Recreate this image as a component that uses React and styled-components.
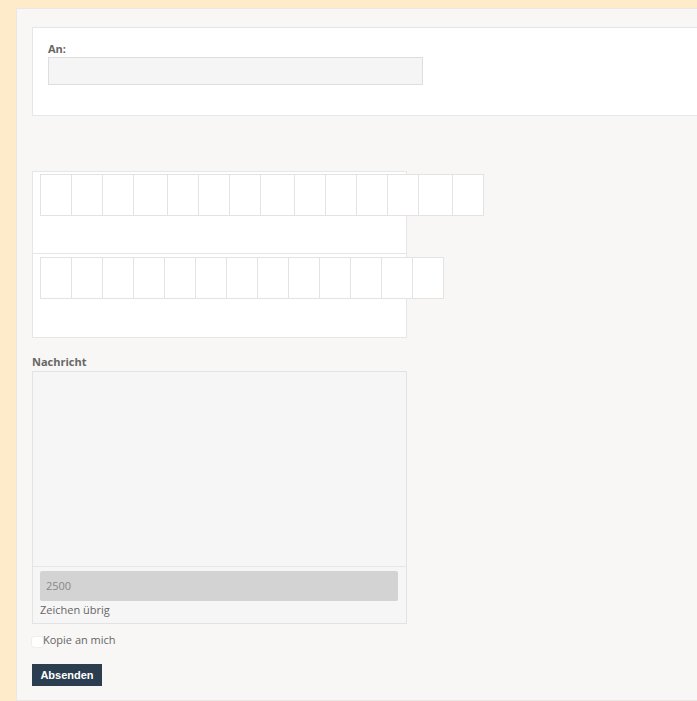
import React from "react";
import styled, { createGlobalStyle } from "styled-components";

const Global = createGlobalStyle`
  html, body { margin: 0; padding: 0; }
  body {
    background: #fdebc9;
    overflow: hidden;
    font-family: "Open Sans", "Liberation Sans", sans-serif;
  }
`;

const Page = styled.div`
  padding: 8px 0 0 16px;
  width: 100%;
  height: 701px;
  box-sizing: border-box;
  overflow: hidden;
`;

const Panel = styled.div`
  width: 720px;
  height: 693px;
  box-sizing: border-box;
  background: #f8f7f5;
  border: 1px solid #ebe8e3;
  padding: 18px 0 0 15px;
`;

const RecipientBox = styled.div`
  width: 700px;
  box-sizing: border-box;
  background: #fff;
  border: 1px solid #e6e6e6;
  padding: 13px 15px 30px;
`;

const Label = styled.div`
  font-size: 11px;
  font-weight: 700;
  line-height: 16px;
  color: #666;
`;

const TextInput = styled.div`
  width: 375px;
  height: 28px;
  box-sizing: border-box;
  background: #f5f5f5;
  border: 1px solid #dedede;
`;

const GridStack = styled.div`
  margin-top: 55px;
  width: 375px;
`;

const GridBox = styled.div`
  box-sizing: border-box;
  width: 375px;
  height: ${(p) => p.$h}px;
  background: #fff;
  border: 1px solid #e6e6e6;
  ${(p) => (p.$first ? "" : "border-top: 0;")}
  padding: ${(p) => (p.$first ? 2 : 3)}px 0 0 7px;
`;

const CellRow = styled.div`
  display: flex;
`;

const Cell = styled.div`
  flex: none;
  box-sizing: border-box;
  width: ${(p) => p.$w + 1}px;
  height: 42px;
  margin-right: -1px;
  background: #fff;
  border: 1px solid #e3e3e3;
`;

const MessageLabel = styled(Label)`
  margin-top: 16px;
  margin-bottom: 2px;
  line-height: 15px;
`;

const MessageBox = styled.div`
  width: 375px;
  box-sizing: border-box;
  border: 1px solid #e3e3e3;
  background: #f6f6f6;
`;

const TextArea = styled.div`
  height: 194px;
  border-bottom: 1px solid #e6e6e6;
`;

const Counter = styled.div`
  padding: 4px 8px 5px 7px;
`;

const CountField = styled.div`
  height: 30px;
  box-sizing: border-box;
  background: #d3d3d3;
  border-radius: 2px;
  padding-left: 6px;
  font-size: 11px;
  line-height: 30px;
  color: #888;
`;

const CountText = styled.div`
  font-size: 11px;
  line-height: 17px;
  color: #666;
`;

const CheckRow = styled.label`
  display: flex;
  align-items: center;
  margin-top: 8px;
  height: 14px;
  font-size: 11px;
  color: #666;
`;

const CheckBox = styled.span`
  width: 11px;
  height: 10px;
  margin-top: 5px;
  background: #fff;
  border-radius: 2px;
  box-shadow: 0 0 0 0.5px #e6e6e6;
`;

const SubmitButton = styled.button`
  display: block;
  margin-top: 18px;
  width: 70px;
  height: 22px;
  padding: 0;
  border: 0;
  background: #2b3e50;
  color: #fff;
  font-family: "Liberation Sans", Arial, sans-serif;
  font-size: 11px;
  font-weight: 700;
`;

const row1 = [31, 31, 31, 34, 31, 31, 31, 34, 31, 31, 31, 31, 34, 31];
const row2 = [31, 31, 31, 31, 31, 31, 31, 31, 31, 31, 31, 31, 31];

export default function App() {
  return (
    <>
      <Global />
      <Page>
        <Panel>
          <RecipientBox>
            <Label>An:</Label>
            <TextInput />
          </RecipientBox>
          <GridStack>
            <GridBox $first $h={83}>
              <CellRow>
                {row1.map((w, i) => (
                  <Cell key={i} $w={w} />
                ))}
              </CellRow>
            </GridBox>
            <GridBox $h={84}>
              <CellRow>
                {row2.map((w, i) => (
                  <Cell key={i} $w={w} />
                ))}
              </CellRow>
            </GridBox>
          </GridStack>
          <MessageLabel>Nachricht</MessageLabel>
          <MessageBox>
            <TextArea />
            <Counter>
              <CountField>2500</CountField>
              <CountText>Zeichen übrig</CountText>
            </Counter>
          </MessageBox>
          <CheckRow>
            <CheckBox />
            Kopie an mich
          </CheckRow>
          <SubmitButton>Absenden</SubmitButton>
        </Panel>
      </Page>
    </>
  );
}
